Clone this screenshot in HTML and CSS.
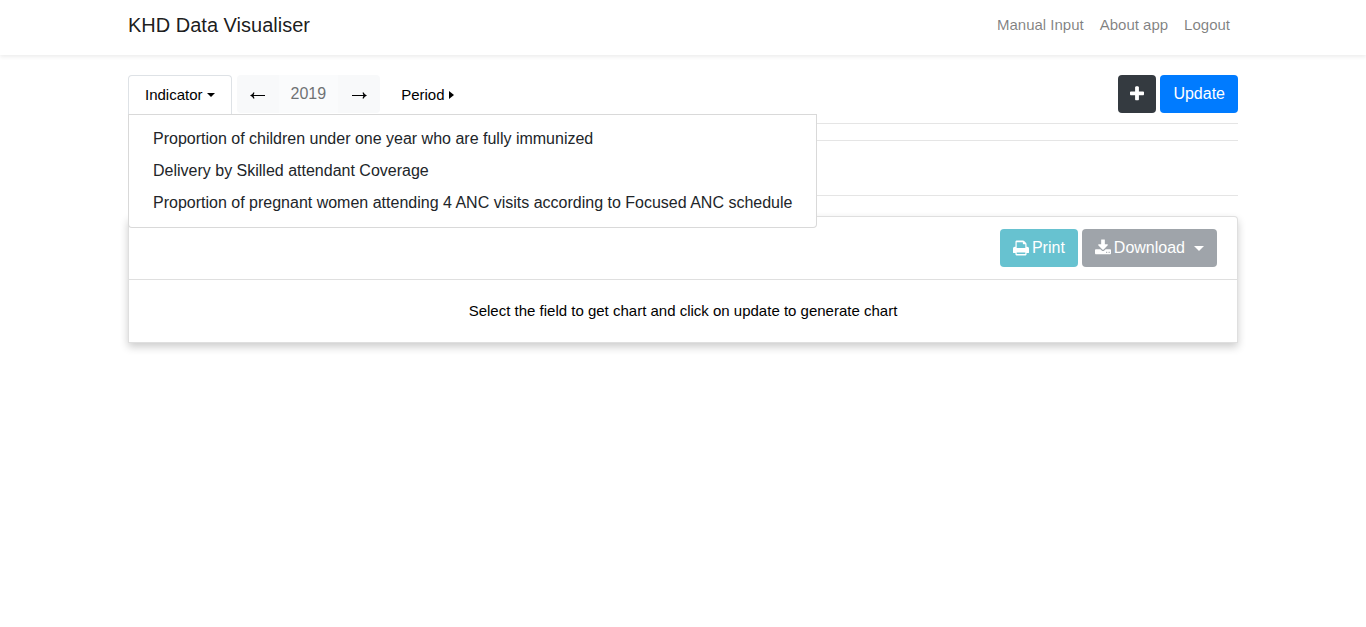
FILE: index.html
```html
<!DOCTYPE html>
<html lang="en">
<head>
<meta charset="utf-8">
<meta name="viewport" content="width=device-width, initial-scale=1">
<title>KHD Data Visualiser</title>
<link rel="stylesheet" href="styles.css">
</head>
<body>
<header class="navbar">
  <div class="container navbar-inner">
    <a class="brand" href="#">KHD Data Visualiser</a>
    <nav class="nav-links">
      <a href="#">Manual Input</a>
      <a href="#">About app</a>
      <a href="#">Logout</a>
    </nav>
  </div>
</header>
<main class="container">
  <div class="toolbar">
    <div class="dropdown">
      <button class="tab tab-active" type="button" aria-expanded="true">Indicator<span class="caret-down"></span></button>
      <div class="menu">
        <a href="#">Proportion of children under one year who are fully immunized</a>
        <a href="#">Delivery by Skilled attendant Coverage</a>
        <a href="#">Proportion of pregnant women attending 4 ANC visits according to Focused ANC schedule</a>
      </div>
    </div>
    <div class="year-group">
      <button class="year-btn" type="button" aria-label="Previous year"><svg class="arrow" viewBox="0 0 16 16" aria-hidden="true"><path d="M0 9.500Q2.500 8.500 3.600 6.300L4.500 6.700L3.600 9H15V10H3.600L4.500 12.300L3.600 12.700Q2.500 10.500 0 9.500Z"/></svg></button>
      <button class="year-btn year-value" type="button" disabled>2019</button>
      <button class="year-btn" type="button" aria-label="Next year"><svg class="arrow" viewBox="0 0 16 16" aria-hidden="true"><path d="M16 9.500Q13.500 8.500 12.400 6.300L11.500 6.700L12.400 9H1V10H12.400L11.500 12.300L12.400 12.700Q13.500 10.500 16 9.500Z"/></svg></button>
    </div>
    <button class="tab" type="button">Period<span class="caret-right"></span></button>
    <div class="actions">
      <button class="btn btn-dark" type="button" aria-label="Add"><svg class="icon" viewBox="192 192 1408 1408" aria-hidden="true"><path d="M1600 736v192q0 40-28 68t-68 28h-416v416q0 40-28 68t-68 28h-192q-40 0-68-28t-28-68v-416h-416q-40 0-68-28t-28-68v-192q0-40 28-68t68-28h416v-416q0-40 28-68t68-28h192q40 0 68 28t28 68v416h416q40 0 68 28t28 68z"/></svg></button>
      <button class="btn btn-primary" type="button">Update</button>
    </div>
  </div>
  <hr class="rule">
  <div class="filters"></div>
  <section class="card">
    <div class="card-header">
      <button class="btn btn-info" type="button" disabled><svg class="icon" viewBox="64 64 1664 1664" aria-hidden="true"><path d="M448 1510h896v-140h-896v140zm0-614h896v-384h-160q-40 0-68-28t-28-68v-130h-640v610zm1280 64v416q0 13-9.500 22.500t-22.500 9.500h-224v160q0 40-28 68t-68 28h-960q-40 0-68-28t-28-68v-160h-224q-13 0-22.500-9.500t-9.500-22.500v-416q0-79 56.500-135.500t135.500-56.500h64v-544q0-40 28-68t68-28h672q40 0 88 20t76 48l152 152q28 28 48 76t20 88v256h64q79 0 135.500 56.500t56.500 135.500z"/></svg>Print</button>
      <button class="btn btn-secondary" type="button" disabled><svg class="icon" viewBox="64 64 1664 1664" aria-hidden="true"><path d="M1344 1344q0-26-19-45t-45-19-45 19-19 45 19 45 45 19 45-19 19-45zm256 0q0-26-19-45t-45-19-45 19-19 45 19 45 45 19 45-19 19-45zm128-224v320q0 40-28 68t-68 28h-1472q-40 0-68-28t-28-68v-320q0-40 28-68t68-28h465l135 136q58 56 136 56t136-56l136-136h464q40 0 68 28t28 68zm-325-569q17 41-14 70l-448 448q-18 19-45 19t-45-19l-448-448q-31-29-14-70 17-39 59-39h256v-448q0-26 19-45t45-19h256q26 0 45 19t19 45v448h256q42 0 59 39z"/></svg>Download<span class="caret-down"></span></button>
    </div>
    <p class="card-body">Select the field to get chart and click on update to generate chart</p>
  </section>
</main>
</body>
</html>
```
FILE: styles.css
```css
*, *::before, *::after { box-sizing: border-box; }

body {
  margin: 0;
  min-height: 100vh;
  background: #fff;
  color: #212529;
  font: 16px/24px "Liberation Sans", Arial, sans-serif;
}

a { color: inherit; text-decoration: none; }

button {
  margin: 0;
  font: inherit;
  border: 1px solid transparent;
  cursor: pointer;
}

button:disabled { cursor: default; }

.container {
  width: 100%;
  max-width: 1140px;
  margin: 0 auto;
  padding: 0 15px;
}

main.container { padding-bottom: 24px; }

.navbar {
  height: 55px;
  margin-bottom: 20px;
  box-shadow: 0 2px 4px rgba(0, 0, 0, .075);
}

.navbar-inner {
  display: flex;
  align-items: center;
  justify-content: space-between;
  padding-top: 10px;
}

.brand {
  color: rgba(0, 0, 0, .9);
  font-size: 20px;
  line-height: 30px;
}

.nav-links {
  display: flex;
  gap: 16px;
  padding-right: 8px;
  color: rgba(0, 0, 0, .5);
  font-size: 15px;
}

.toolbar {
  display: flex;
  align-items: flex-start;
  height: 48px;
}

.dropdown { position: relative; }

.tab {
  display: flex;
  align-items: center;
  gap: 4px;
  height: 40px;
  padding: 0 16px;
  background: transparent;
  color: #000;
  font-size: 15px;
  border-radius: 4px 4px 0 0;
}

.tab-active {
  background: #fff;
  border-color: #dee2e6;
  border-bottom-color: #fff;
}

.menu {
  position: absolute;
  top: 39px;
  left: 0;
  z-index: 10;
  padding: 8px 0;
  background: #fff;
  border: 1px solid rgba(0, 0, 0, .15);
  border-radius: 0 0 4px 4px;
}

.menu a {
  display: block;
  padding: 4px 24px;
  white-space: nowrap;
}

.year-group {
  display: flex;
  margin: 0 4px 0 5px;
  border-radius: 4px;
  overflow: hidden;
}

.year-btn {
  height: 38px;
  padding: 0 12px;
  background: #f8f9fa;
  color: #212529;
}

.year-btn + .year-btn { margin-left: -1px; }

.year-value { opacity: .65; }
.year-value:disabled { color: #212529; }

.arrow {
  display: block;
  width: 16px;
  height: 16px;
  fill: #000;
}

.actions {
  display: flex;
  gap: 4px;
  margin-left: auto;
}

.btn {
  display: flex;
  align-items: center;
  gap: 3px;
  height: 38px;
  padding: 0 12px;
  color: #fff;
  border-radius: 4px;
}

.btn:disabled { opacity: .65; }
.btn-dark { padding: 0 11px; background: #343a40; }
.btn-primary { background: #007bff; }
.btn-info { background: #17a2b8; }
.btn-secondary { background: #6c757d; }

.icon {
  width: 16px;
  height: 16px;
  fill: currentColor;
  overflow: visible;
}

.btn-dark .icon {
  width: 14px;
  height: 14px;
}

.caret-down {
  border-top: 4px solid;
  border-left: 4px solid transparent;
  border-right: 4px solid transparent;
}

.btn .caret-down {
  margin-left: 6px;
  border-width: 5px 5px 0;
}

.caret-right {
  border-left: 5px solid;
  border-top: 4px solid transparent;
  border-bottom: 4px solid transparent;
}

.rule {
  margin: 0 0 16px;
  border: 0;
  border-top: 1px solid rgba(0, 0, 0, .1);
}

.filters {
  height: 56px;
  margin-bottom: 20px;
  border: 1px solid rgba(0, 0, 0, .1);
  border-left: 0;
  border-right: 0;
}

.card {
  background: #fff;
  border: 1px solid rgba(0, 0, 0, .125);
  border-radius: 4px 4px 0 0;
  box-shadow: 0 4px 8px rgba(0, 0, 0, .2);
}

.card-header {
  display: flex;
  justify-content: flex-end;
  gap: 4px;
  padding: 12px 20px;
  border-bottom: 1px solid rgba(0, 0, 0, .125);
}

.card-body {
  margin: 0;
  padding: 20px;
  color: #000;
  font-size: 15px;
  line-height: 22px;
  text-align: center;
}
```
